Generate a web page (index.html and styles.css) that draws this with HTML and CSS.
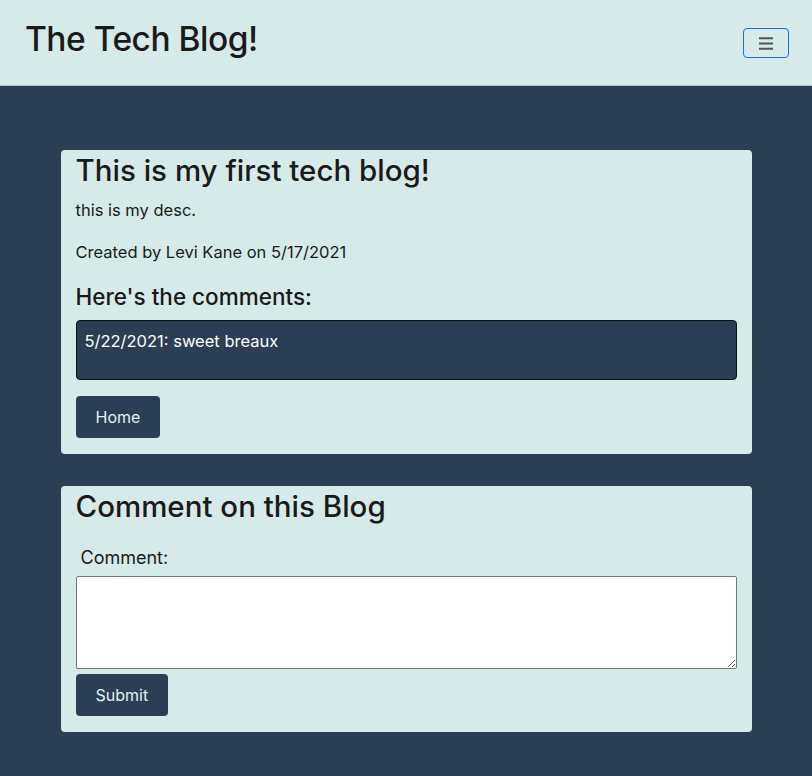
FILE: index.html
```html
<!DOCTYPE html>
<html lang="en">
<head>
<meta charset="utf-8">
<title>The Tech Blog!</title>
<link rel="stylesheet" href="styles.css">
</head>
<body>
<header class="topbar">
  <h1 class="brand">The Tech Blog!</h1>
  <button class="toggler" type="button" aria-label="Toggle navigation">
    <svg width="14" height="13" viewBox="0 0 14 13"><path d="M0 1.3h14M0 6.5h14M0 11.7h14" stroke="#555" stroke-width="2"/></svg>
  </button>
</header>
<main class="page">
  <section class="card">
    <h2 class="card-title">This is my first tech blog!</h2>
    <p class="text">this is my desc.</p>
    <p class="text text-last">Created by Levi Kane on 5/17/2021</p>
    <h4 class="sub">Here's the comments:</h4>
    <div class="comment">5/22/2021: sweet breaux</div>
    <a class="btn" href="#">Home</a>
  </section>
  <section class="card">
    <h2 class="card-title">Comment on this Blog</h2>
    <form class="form">
      <label class="label" for="c">Comment:</label>
      <textarea id="c" class="area"></textarea>
      <button class="btn" type="submit">Submit</button>
    </form>
  </section>
</main>
</body>
</html>
```
FILE: styles.css
```css
html, body {
  margin: 0;
  padding: 0;
}
body {
  background: #2c3e54;
  font-family: Inter, "Noto Sans", "Liberation Sans", sans-serif;
  color: #1a1a1a;
  font-size: 16.5px;
  line-height: 26px;
  min-height: 776px;
}
.topbar {
  background: #d6eae9;
  height: 85px;
  border-bottom: 1px solid #b9c6c8;
  display: flex;
  align-items: center;
  justify-content: space-between;
  padding: 0 23px 0 25px;
  box-sizing: content-box;
}
.brand {
  margin: 0 0 6px 0;
  font-size: 33.5px;
  font-weight: 500;
  line-height: 1.2;
  letter-spacing: -0.5px;
}
.toggler {
  width: 46px;
  height: 30px;
  border: 1px solid #1a6ef5;
  border-radius: 4px;
  background: transparent;
  display: flex;
  align-items: center;
  justify-content: center;
  padding: 0;
  margin-top: 1px;
}
.page {
  display: flex;
  flex-direction: column;
  align-items: center;
  gap: 32px;
  padding-top: 64px;
}
.card {
  width: 691px;
  box-sizing: border-box;
  background: #d6eae9;
  border-radius: 4px;
  padding: 3px 15px 16px 15px;
}
.card-title {
  margin: 0 0 9px 0;
  font-size: 29.5px;
  font-weight: 500;
  line-height: 35px;
}
.text {
  margin: 0 0 16px 0;
}
.text-last {
  margin-bottom: 18px;
}
.sub {
  margin: 0 0 10px 0;
  font-size: 22.5px;
  font-weight: 500;
  line-height: 27px;
}
.comment {
  background: #2c3e54;
  color: #fff;
  border: 1px solid #111;
  border-radius: 4px;
  padding: 7px 8px;
  box-sizing: border-box;
  height: 60px;
  margin-bottom: 16px;
}
.btn {
  display: inline-block;
  background: #2c3e54;
  color: #e4f1f1;
  border: none;
  border-radius: 4px;
  font-family: inherit;
  font-size: 16px;
  line-height: 24px;
  padding: 9px 20px;
  text-decoration: none;
}
.form {
  display: flex;
  flex-direction: column;
  align-items: flex-start;
  padding-top: 12px;
}
.label {
  font-size: 18px;
  margin-left: 5px;
  margin-bottom: 5px;
}
.area {
  width: 661px;
  height: 93px;
  box-sizing: border-box;
  border: 1px solid #767676;
  border-radius: 2px;
  background: #fff;
  margin: 0 0 5px 0;
}
```
